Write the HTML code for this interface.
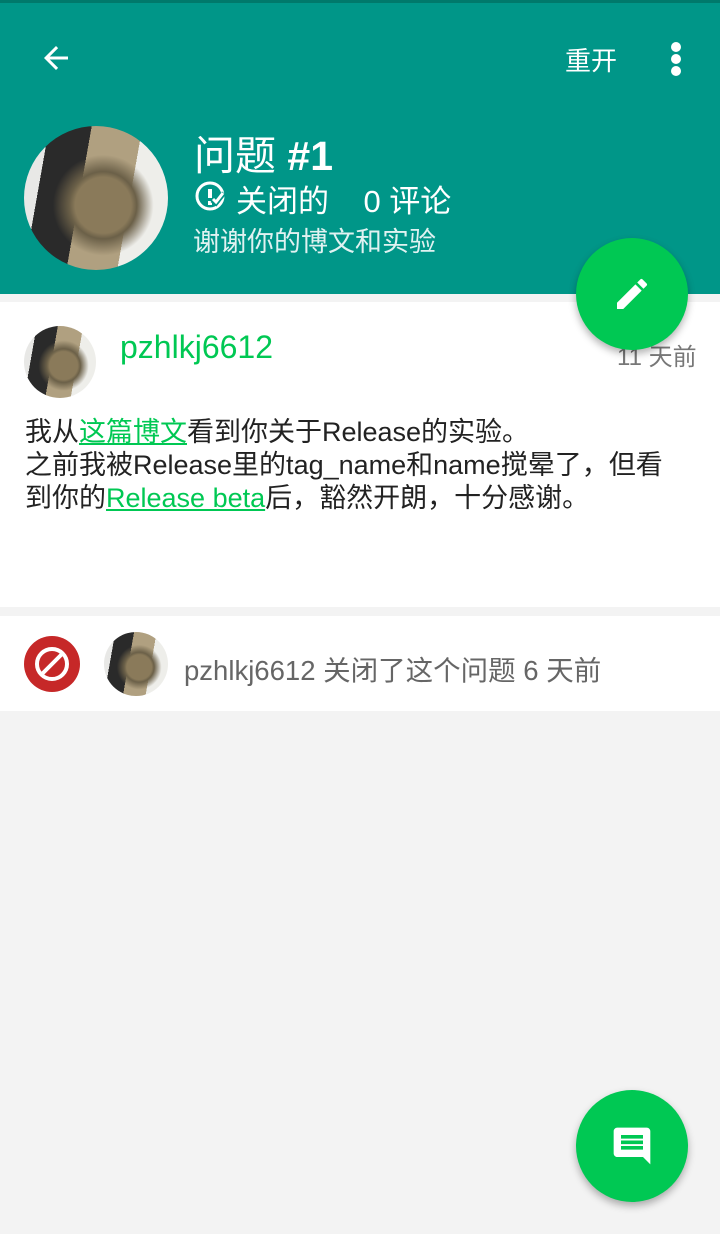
<!DOCTYPE html>
<html><head><meta charset="utf-8"><style>
*{margin:0;padding:0;box-sizing:border-box}
body{width:720px;height:1234px;background:#f3f3f3;font-family:"Liberation Sans","Noto Sans CJK SC",sans-serif;position:relative;overflow:hidden}
.hdr{position:absolute;left:0;top:0;width:720px;height:294px;background:#009688;border-top:3px solid #00796b}
.av{position:absolute;border-radius:50%;background:radial-gradient(circle at 55% 55%,#8a7a5a 0 25%,#6b6048 30%,transparent 45%),linear-gradient(100deg,#e8e8e6 0 15%,#2a2a2a 15% 40%,#b0a080 40% 70%,#eeeeea 70%);}
.t{position:absolute;white-space:nowrap}
.card{position:absolute;left:0;width:720px;background:#fff}
.fab{position:absolute;width:112px;height:112px;border-radius:50%;background:#00c853;box-shadow:0 4px 8px rgba(0,0,0,.3)}
a{color:#00c853;text-decoration:underline}
</style></head><body>
<div class="hdr"></div>
<svg style="position:absolute;left:38px;top:40px" width="36" height="36" viewBox="0 0 24 24"><path d="M20 11H7.83l5.59-5.59L12 4l-8 8 8 8 1.41-1.41L7.83 13H20v-2z" fill="#fff"/></svg>
<div class="t" style="left:565px;top:41px;font-size:26px;color:#fff">重开</div>
<div style="position:absolute;left:671px;top:42px;width:10px;height:10px;border-radius:50%;background:#fff"></div>
<div style="position:absolute;left:671px;top:54px;width:10px;height:10px;border-radius:50%;background:#fff"></div>
<div style="position:absolute;left:671px;top:66px;width:10px;height:10px;border-radius:50%;background:#fff"></div>
<div class="av" style="left:24px;top:126px;width:144px;height:144px"></div>
<div class="t" style="left:194px;top:122px;font-size:41px;color:#fff">问题 <b>#1</b></div>
<svg style="position:absolute;left:194px;top:180px" width="32" height="32" viewBox="0 0 32 32"><circle cx="16" cy="16" r="13" fill="none" stroke="#fff" stroke-width="3"/><rect x="14" y="9" width="4" height="9" fill="#fff"/><rect x="14" y="21" width="4" height="4" fill="#fff"/><path d="M18 20l4 3 8-10" fill="none" stroke="#009688" stroke-width="5"/><path d="M19 19l3 3 7-9" fill="none" stroke="#fff" stroke-width="3"/></svg>
<div class="t" style="left:236px;top:176px;font-size:31px;color:#fff">关闭的&nbsp;&nbsp;&nbsp;&nbsp;0 评论</div>
<div class="t" style="left:193px;top:220px;font-size:27px;color:#e0f2f1">谢谢你的博文和实验</div>
<div class="card" style="top:302px;height:305px"></div>
<div class="av" style="left:24px;top:326px;width:72px;height:72px"></div>
<div class="t" style="left:120px;top:329px;font-size:32px;color:#00c853">pzhlkj6612</div>
<div class="t" style="left:617px;top:337px;font-size:24px;color:#777">11 天前</div>
<div style="position:absolute;left:25px;top:416px;font-size:27px;line-height:33px;color:#222;white-space:nowrap">我从<a>这篇博文</a>看到你关于Release的实验。<br>之前我被Release里的tag_name和name搅晕了，但看<br>到你的<a>Release beta</a>后，豁然开朗，十分感谢。</div>
<div class="card" style="top:616px;height:95px"></div>
<div style="position:absolute;left:24px;top:636px;width:56px;height:56px;border-radius:50%;background:#c62828"></div>
<svg style="position:absolute;left:24px;top:636px" width="56" height="56" viewBox="0 0 56 56"><circle cx="28" cy="28" r="15" fill="none" stroke="#fff" stroke-width="4"/><path d="M18 38L38 18" stroke="#fff" stroke-width="4"/></svg>
<div class="av" style="left:104px;top:632px;width:64px;height:64px"></div>
<div class="t" style="left:184px;top:648px;font-size:27.5px;color:#666">pzhlkj6612 关闭了这个问题 6 天前</div>
<div class="fab" style="left:576px;top:238px"></div>
<svg style="position:absolute;left:612px;top:274px" width="40" height="40" viewBox="0 0 24 24"><path d="M3 17.25V21h3.75L17.81 9.94l-3.75-3.75L3 17.25zM20.71 7.04a1 1 0 000-1.41l-2.34-2.34a1 1 0 00-1.41 0l-1.830 1.83 3.75 3.75 1.83-1.83z" fill="#fff"/></svg>
<div class="fab" style="left:576px;top:1090px"></div>
<svg style="position:absolute;left:610px;top:1124px" width="44" height="44" viewBox="0 0 24 24"><path d="M21.99 4c0-1.1-.89-2-1.99-2H4c-1.1 0-2 .9-2 2v12c0 1.1.9 2 2 2h14l4 4-.01-18zM18 14H6v-2h12v2zm0-3H6V9h12v2zm0-3H6V6h12v2z" fill="#fff"/></svg>
</body></html>
